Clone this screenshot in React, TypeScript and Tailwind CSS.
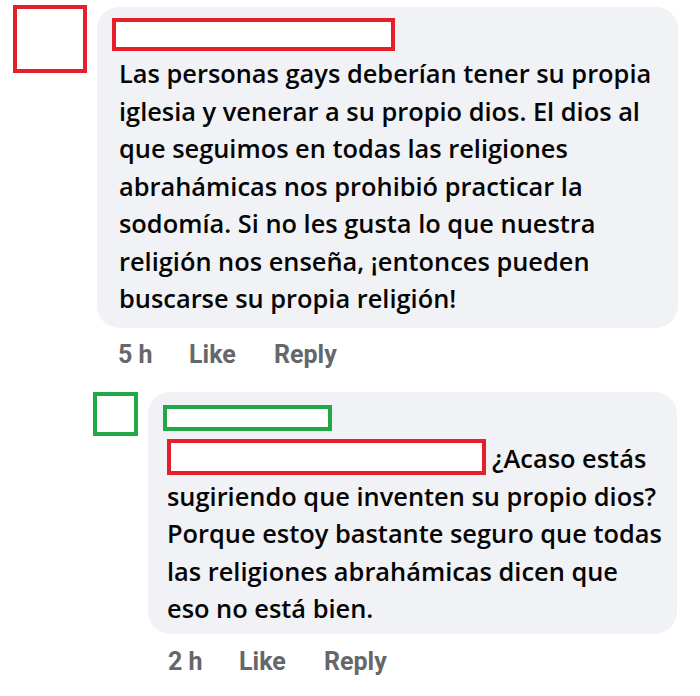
import React from "react";

const Meta = ({ time }: { time: string }) => (
  <div className="flex items-center text-[25px] leading-none font-bold text-[#65676b] font-['Roboto',sans-serif]">
    <span className="w-[71px]">{time}</span>
    <span className="w-[85px]">Like</span>
    <span>Reply</span>
  </div>
);

const App = () => {
  const first = [
    "Las personas gays deberían tener su propia",
    "iglesia y venerar a su propio dios. El dios al",
    "que seguimos en todas las religiones",
    "abrahámicas nos prohibió practicar la",
    "sodomía. Si no les gusta lo que nuestra",
    "religión nos enseña, ¡entonces pueden",
    "buscarse su propia religión!",
  ];
  const second = [
    "sugiriendo que inventen su propio dios?",
    "Porque estoy bastante seguro que todas",
    "las religiones abrahámicas dicen que",
    "eso no está bien.",
  ];

  return (
    <div className="w-[700px] h-[696px] bg-white font-['Open_Sans',sans-serif] text-[#050505] overflow-hidden">
      {/* Top comment */}
      <div className="flex pt-[5px] pl-[13px]">
        <div className="w-[74px] h-[68px] border-4 border-[#e4212b] bg-white shrink-0" />
        <div className="ml-[10px] mt-[2px]">
          <div className="w-[581px] h-[321px] bg-[#f0f2f5] rounded-[22px] pt-[11px] pl-[15px]">
            <div className="w-[283px] h-[33px] border-4 border-[#e4212b] bg-white" />
            <div className="pl-[7px] mt-[4px] text-[25.4px] leading-[37.5px] font-semibold">
              {first.map((l) => (
                <div key={l} className="whitespace-nowrap">{l}</div>
              ))}
            </div>
          </div>
          <div className="pl-[21px] mt-[14px]">
            <Meta time="5 h" />
          </div>
        </div>
      </div>

      {/* Reply */}
      <div className="flex pl-[93px] mt-[25px]">
        <div className="w-[45px] h-[44px] border-4 border-[#22a845] bg-white shrink-0" />
        <div className="ml-[10px]">
          <div className="w-[529px] h-[242px] bg-[#f0f2f5] rounded-[22px] pt-[13px] pl-[15px]">
            <div className="w-[169px] h-[26px] border-4 border-[#22a845] bg-white" />
            <div className="pl-[4px] mt-[9px] text-[25.4px] leading-[37.5px] font-semibold">
              <div className="flex items-center whitespace-nowrap">
                <span className="inline-block w-[319px] h-[36px] border-4 border-[#e4212b] bg-white mr-[6px] -mt-[4px]" />
                <span>¿Acaso estás</span>
              </div>
              {second.map((l) => (
                <div key={l} className="whitespace-nowrap">{l}</div>
              ))}
            </div>
          </div>
          <div className="pl-[20px] mt-[15px]">
            <Meta time="2 h" />
          </div>
        </div>
      </div>
    </div>
  );
};

export default App;
